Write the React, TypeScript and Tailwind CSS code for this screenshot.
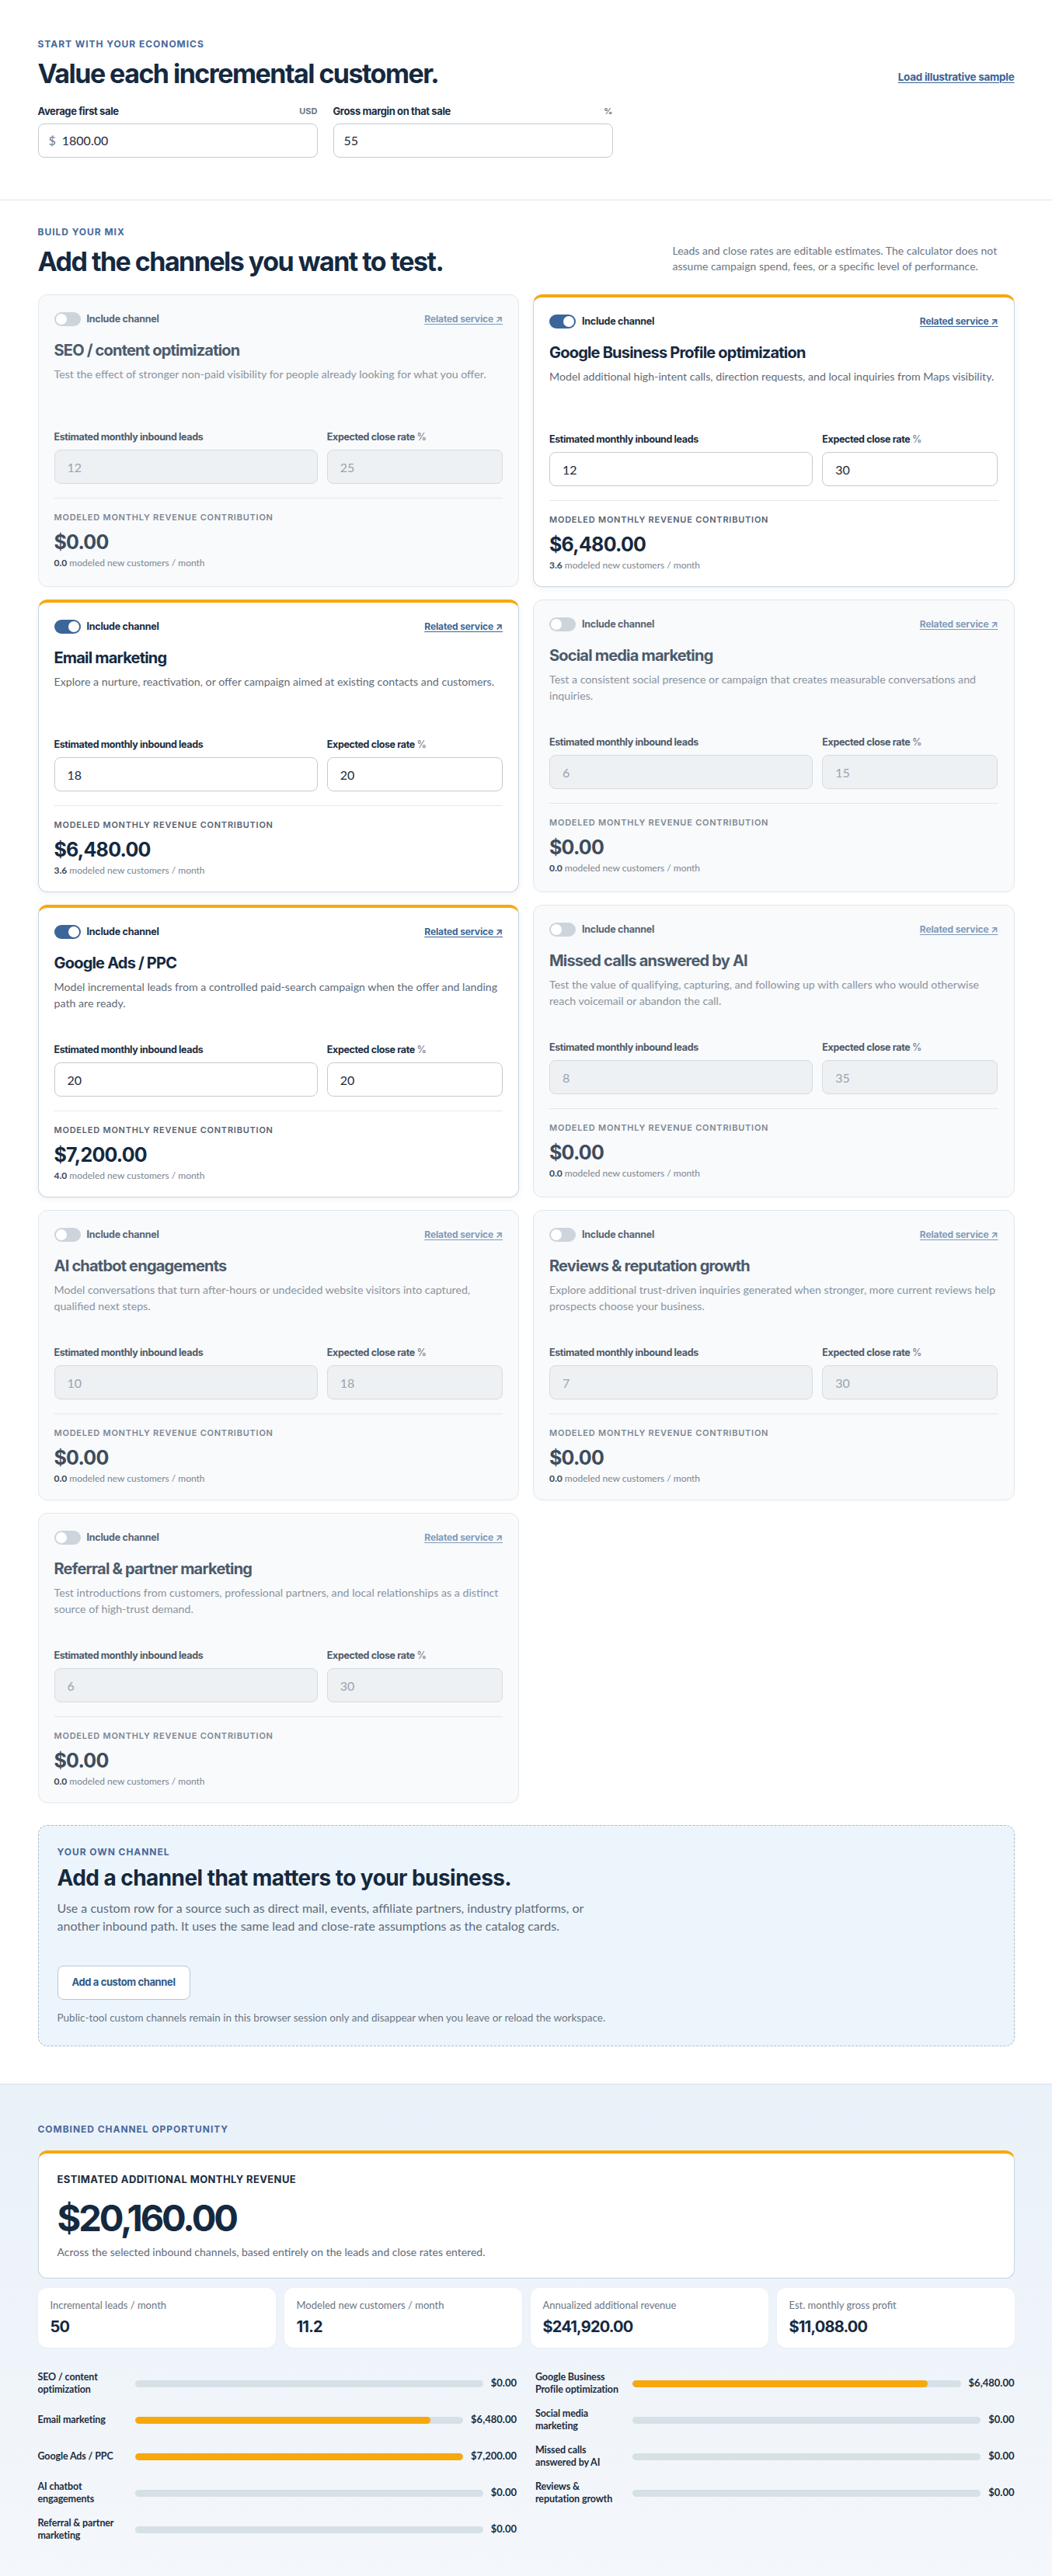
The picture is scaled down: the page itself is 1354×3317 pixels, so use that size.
import React from "react";

type Channel = {
  name: string;
  lines: string[];
  desc: string;
  leads: number;
  rate: number;
  on: boolean;
};

const SALE = 1800;
const MARGIN = 55;

const channels: Channel[] = [
  { name: "SEO / content optimization", lines: ["SEO / content", "optimization"], desc: "Test the effect of stronger non-paid visibility for people already looking for what you offer.", leads: 12, rate: 25, on: false },
  { name: "Google Business Profile optimization", lines: ["Google Business", "Profile optimization"], desc: "Model additional high-intent calls, direction requests, and local inquiries from Maps visibility.", leads: 12, rate: 30, on: true },
  { name: "Email marketing", lines: ["Email marketing"], desc: "Explore a nurture, reactivation, or offer campaign aimed at existing contacts and customers.", leads: 18, rate: 20, on: true },
  { name: "Social media marketing", lines: ["Social media", "marketing"], desc: "Test a consistent social presence or campaign that creates measurable conversations and inquiries.", leads: 6, rate: 15, on: false },
  { name: "Google Ads / PPC", lines: ["Google Ads / PPC"], desc: "Model incremental leads from a controlled paid-search campaign when the offer and landing path are ready.", leads: 20, rate: 20, on: true },
  { name: "Missed calls answered by AI", lines: ["Missed calls", "answered by AI"], desc: "Test the value of qualifying, capturing, and following up with callers who would otherwise reach voicemail or abandon the call.", leads: 8, rate: 35, on: false },
  { name: "AI chatbot engagements", lines: ["AI chatbot", "engagements"], desc: "Model conversations that turn after-hours or undecided website visitors into captured, qualified next steps.", leads: 10, rate: 18, on: false },
  { name: "Reviews & reputation growth", lines: ["Reviews &", "reputation growth"], desc: "Explore additional trust-driven inquiries generated when stronger, more current reviews help prospects choose your business.", leads: 7, rate: 30, on: false },
  { name: "Referral & partner marketing", lines: ["Referral & partner", "marketing"], desc: "Test introductions from customers, professional partners, and local relationships as a distinct source of high-trust demand.", leads: 6, rate: 30, on: false },
];

const money = (n: number) =>
  "$" + n.toLocaleString("en-US", { minimumFractionDigits: 2, maximumFractionDigits: 2 });

const customers = (c: Channel) => (c.on ? (c.leads * c.rate) / 100 : 0);
const revenue = (c: Channel) => customers(c) * SALE;

function Toggle({ on }: { on: boolean }) {
  return (
    <div
      className={
        "flex h-[18px] w-[34px] items-center rounded-full p-[2px] " +
        (on ? "justify-end bg-[#3b6699]" : "justify-start bg-[#cdd4db]")
      }
    >
      <div className="h-[14px] w-[14px] rounded-full bg-white" />
    </div>
  );
}

function ChannelCard({ c }: { c: Channel }) {
  const on = c.on;
  return (
    <div
      className={
        "flex flex-col rounded-xl px-5 pb-[19px] pt-5 " +
        (on
          ? "border border-t-4 border-[#c6d4e1] border-t-[#f7a80d] bg-white shadow-[0_2px_8px_rgba(20,40,70,0.06)]"
          : "border border-[#e1e7ed] bg-[#f8fafc]")
      }
    >
      <div className="flex h-[22px] items-center justify-between">
        <div className="flex items-center gap-2">
          <Toggle on={on} />
          <span
            className={
              "font-['Inter',sans-serif] text-[12.5px] font-bold tracking-[-0.02em] " +
              (on ? "text-[#1c2c3e]" : "text-[#5a6675]")
            }
          >
            Include channel
          </span>
        </div>
        <a
          className={
            "font-['Inter',sans-serif] text-[12px] font-bold tracking-[-0.01em] underline underline-offset-2 " +
            (on ? "text-[#3a6496]" : "text-[#7f9ab9]")
          }
        >
          Related service ↗
        </a>
      </div>
      <h3
        className={
          "mt-[15px] font-['Inter',sans-serif] text-[20px] font-bold leading-[28px] tracking-[-0.04em] " +
          (on ? "text-[#15293f]" : "text-[#4c5a6b]")
        }
      >
        {c.name}
      </h3>
      <p
        className={
          "mt-[6px] min-h-[60px] text-[14.2px] leading-[21px] " +
          (on ? "text-[#5f6b79]" : "text-[#8a939e]")
        }
      >
        {c.desc}
      </p>
      <div className="mt-[23px] grid grid-cols-[1.5fr_1fr] gap-3">
        <div>
          <div
            className={
              "font-['Inter',sans-serif] text-[12.5px] font-bold leading-[18px] tracking-[-0.03em] " +
              (on ? "text-[#1c2c3e]" : "text-[#4f5b69]")
            }
          >
            Estimated monthly inbound leads
          </div>
          <input
            readOnly
            disabled={!on}
            value={c.leads}
            className={
              "mt-[7px] h-[44px] w-full rounded-lg border px-4 text-[16px] outline-none " +
              (on
                ? "border-[#c4cbd3] bg-white text-[#1e2a38]"
                : "border-[#d5dbe1] bg-[#eef1f4] text-[#9aa3ad]")
            }
          />
        </div>
        <div>
          <div
            className={
              "font-['Inter',sans-serif] text-[12.5px] font-bold leading-[18px] tracking-[-0.03em] " +
              (on ? "text-[#1c2c3e]" : "text-[#4f5b69]")
            }
          >
            Expected close rate <span className="font-medium text-[#7a8593]">%</span>
          </div>
          <input
            readOnly
            disabled={!on}
            value={c.rate}
            className={
              "mt-[7px] h-[44px] w-full rounded-lg border px-4 text-[16px] outline-none " +
              (on
                ? "border-[#c4cbd3] bg-white text-[#1e2a38]"
                : "border-[#d5dbe1] bg-[#eef1f4] text-[#9aa3ad]")
            }
          />
        </div>
      </div>
      <div className="mt-[18px] border-t border-[#e3e8ed] pt-[16px]">
        <div
          className={
            "font-['Inter',sans-serif] text-[11px] font-semibold uppercase leading-[16px] tracking-[0.07em] " +
            (on ? "text-[#566270]" : "text-[#7d8792]")
          }
        >
          Modeled monthly revenue contribution
        </div>
        <div
          className={
            "mt-[8px] font-['Inter',sans-serif] text-[25px] font-bold leading-[32px] tracking-[-0.03em] " +
            (on ? "text-[#15293f]" : "text-[#3f4c5c]")
          }
        >
          {money(revenue(c))}
        </div>
        <div className="mt-[3px] text-[12px] leading-[16px] text-[#7b8591]">
          <span className="font-bold text-[#3a4654]">{customers(c).toFixed(1)}</span> modeled new customers / month
        </div>
      </div>
    </div>
  );
}

export default function App() {
  const totalRev = channels.reduce((s, c) => s + revenue(c), 0);
  const totalLeads = channels.reduce((s, c) => s + (c.on ? c.leads : 0), 0);
  const totalCust = channels.reduce((s, c) => s + customers(c), 0);
  const maxRev = Math.max(...channels.map(revenue));

  return (
    <div className="min-h-[3317px] bg-white font-['Lato',sans-serif] text-[#15293f]">
      {/* Section 1 */}
      <section className="border-b border-[#dfe5ea] pb-[54px] pt-[49px]">
        <div className="mx-auto w-[1257px]">
          <div className="font-['Inter',sans-serif] text-[12px] font-bold uppercase leading-[16px] tracking-[0.08em] text-[#46699a]">
            Start with your economics
          </div>
          <div className="mt-[10px] flex items-end justify-between">
            <h1 className="font-['Inter',sans-serif] text-[34px] font-bold leading-[40px] tracking-[-0.045em] text-[#15293f]">
              Value each incremental customer.
            </h1>
            <a className="mb-[6px] font-['Inter',sans-serif] text-[13.5px] font-bold tracking-[-0.02em] text-[#3a6496] underline underline-offset-2">
              Load illustrative sample
            </a>
          </div>
          <div className="mt-[19px] grid w-[740px] grid-cols-2 gap-5">
            <div>
              <div className="flex items-end justify-between">
                <span className="font-['Inter',sans-serif] text-[13px] font-bold leading-[18px] tracking-[-0.03em] text-[#1c2c3e]">
                  Average first sale
                </span>
                <span className="font-['Inter',sans-serif] text-[11px] font-bold leading-[18px] text-[#6b7683]">USD</span>
              </div>
              <div className="mt-[7px] flex h-[44px] items-center rounded-lg border border-[#c4cbd3] bg-white px-[13px] text-[16px]">
                <span className="mr-[8px] text-[#6b7683]">$</span>
                <span className="text-[#1e2a38]">{SALE.toFixed(2)}</span>
              </div>
            </div>
            <div>
              <div className="flex items-end justify-between">
                <span className="font-['Inter',sans-serif] text-[13px] font-bold leading-[18px] tracking-[-0.03em] text-[#1c2c3e]">
                  Gross margin on that sale
                </span>
                <span className="font-['Inter',sans-serif] text-[11px] font-bold leading-[18px] text-[#6b7683]">%</span>
              </div>
              <div className="mt-[7px] flex h-[44px] items-center rounded-lg border border-[#c4cbd3] bg-white px-[13px] text-[16px] text-[#1e2a38]">
                {MARGIN}
              </div>
            </div>
          </div>
        </div>
      </section>

      {/* Section 2 */}
      <section className="pb-[48px] pt-[33px]">
        <div className="mx-auto w-[1257px]">
          <div className="flex items-end justify-between">
            <div>
              <div className="font-['Inter',sans-serif] text-[12px] font-bold uppercase leading-[16px] tracking-[0.08em] text-[#46699a]">
                Build your mix
              </div>
              <h2 className="mt-[10px] font-['Inter',sans-serif] text-[34px] font-bold leading-[40px] tracking-[-0.045em] text-[#15293f]">
                Add the channels you want to test.
              </h2>
            </div>
            <p className="mb-[4px] w-[440px] text-[14px] leading-[20px] text-[#6b7683]">
              Leads and close rates are editable estimates. The calculator does not assume campaign spend, fees, or a specific level of performance.
            </p>
          </div>

          <div className="mt-[22px] grid grid-cols-2 gap-x-[18px] gap-y-[16px]">
            {channels.map((c) => (
              <ChannelCard key={c.name} c={c} />
            ))}
          </div>

          <div className="mt-[28px] rounded-xl border border-dashed border-[#a9bccf] bg-[#edf5fc] px-6 pb-[26px] pt-[26px]">
            <div className="font-['Inter',sans-serif] text-[12px] font-bold uppercase leading-[16px] tracking-[0.08em] text-[#46699a]">
              Your own channel
            </div>
            <h3 className="mt-[8px] font-['Inter',sans-serif] text-[28px] font-bold leading-[34px] tracking-[-0.02em] text-[#15293f]">
              Add a channel that matters to your business.
            </h3>
            <p className="mt-[10px] max-w-[720px] text-[16px] leading-[23px] text-[#5f6b79]">
              Use a custom row for a source such as direct mail, events, affiliate partners, industry platforms, or another inbound path. It uses the same lead and close-rate assumptions as the catalog cards.
            </p>
            <button className="mt-[40px] h-[44px] rounded-lg border border-[#b9c6d3] bg-white px-[18px] font-['Inter',sans-serif] text-[13px] font-bold tracking-[-0.03em] text-[#2f5a8a]">
              Add a custom channel
            </button>
            <p className="mt-[13px] text-[13.5px] leading-[20px] text-[#6b7683]">
              Public-tool custom channels remain in this browser session only and disappear when you leave or reload the workspace.
            </p>
          </div>
        </div>
      </section>

      {/* Section 3 summary */}
      <section className="border-t border-[#d8e1ea] bg-gradient-to-b from-[#e9f1f9] to-[#f4f7fb] pb-[48px] pt-[50px]">
        <div className="mx-auto w-[1257px]">
          <div className="font-['Inter',sans-serif] text-[12px] font-bold uppercase leading-[16px] tracking-[0.08em] text-[#46699a]">
            Combined channel opportunity
          </div>
          <div className="mt-[19px] rounded-xl border border-t-4 border-[#c6d4e1] border-t-[#f7a80d] bg-white px-6 pb-[23px] pt-[24px]">
            <div className="font-['Inter',sans-serif] text-[13px] font-bold uppercase leading-[18px] tracking-[0.03em] text-[#1c2c3e]">
              Estimated additional monthly revenue
            </div>
            <div className="mt-[13px] font-['Inter',sans-serif] text-[47px] font-bold leading-[56px] tracking-[-0.065em] text-[#15293f]">
              {money(totalRev)}
            </div>
            <p className="mt-[6px] text-[14px] leading-[20px] text-[#5f6b79]">
              Across the selected inbound channels, based entirely on the leads and close rates entered.
            </p>
          </div>

          <div className="mt-[12px] grid grid-cols-4 gap-[11px]">
            {[
              ["Incremental leads / month", String(totalLeads)],
              ["Modeled new customers / month", totalCust.toFixed(1)],
              ["Annualized additional revenue", money(totalRev * 12)],
              ["Est. monthly gross profit", money((totalRev * MARGIN) / 100)],
            ].map(([l, v]) => (
              <div key={l} className="rounded-xl bg-white px-[16px] pb-[13px] pt-[13px] shadow-[0_1px_3px_rgba(20,40,70,0.04)]">
                <div className="text-[13px] leading-[18px] text-[#6b7683]">{l}</div>
                <div className="mt-[5px] font-['Inter',sans-serif] text-[20px] font-bold leading-[28px] tracking-[-0.04em] text-[#15293f]">
                  {v}
                </div>
              </div>
            ))}
          </div>

          <div className="mt-[30px] grid grid-cols-2 gap-x-6 gap-y-[15px]">
            {channels.map((c) => {
              const r = revenue(c);
              const pct = maxRev > 0 ? (r / maxRev) * 100 : 0;
              return (
                <div key={c.name} className="flex h-[32px] items-center">
                  <div className="w-[120px] shrink-0 text-[12.5px] font-bold leading-[16px] tracking-[-0.01em] text-[#1c2c3e]">
                    {c.lines.map((l) => (
                      <div key={l} className="whitespace-nowrap">
                        {l}
                      </div>
                    ))}
                  </div>
                  <div className="ml-[5px] h-[9px] flex-1 overflow-hidden rounded-full bg-[#d6e0e7]">
                    <div className="h-full rounded-full bg-[#f7a80d]" style={{ width: `${pct}%` }} />
                  </div>
                  <div className="ml-[10px] text-[13px] font-bold text-[#1c2c3e]">{money(r)}</div>
                </div>
              );
            })}
          </div>
        </div>
      </section>
    </div>
  );
}
